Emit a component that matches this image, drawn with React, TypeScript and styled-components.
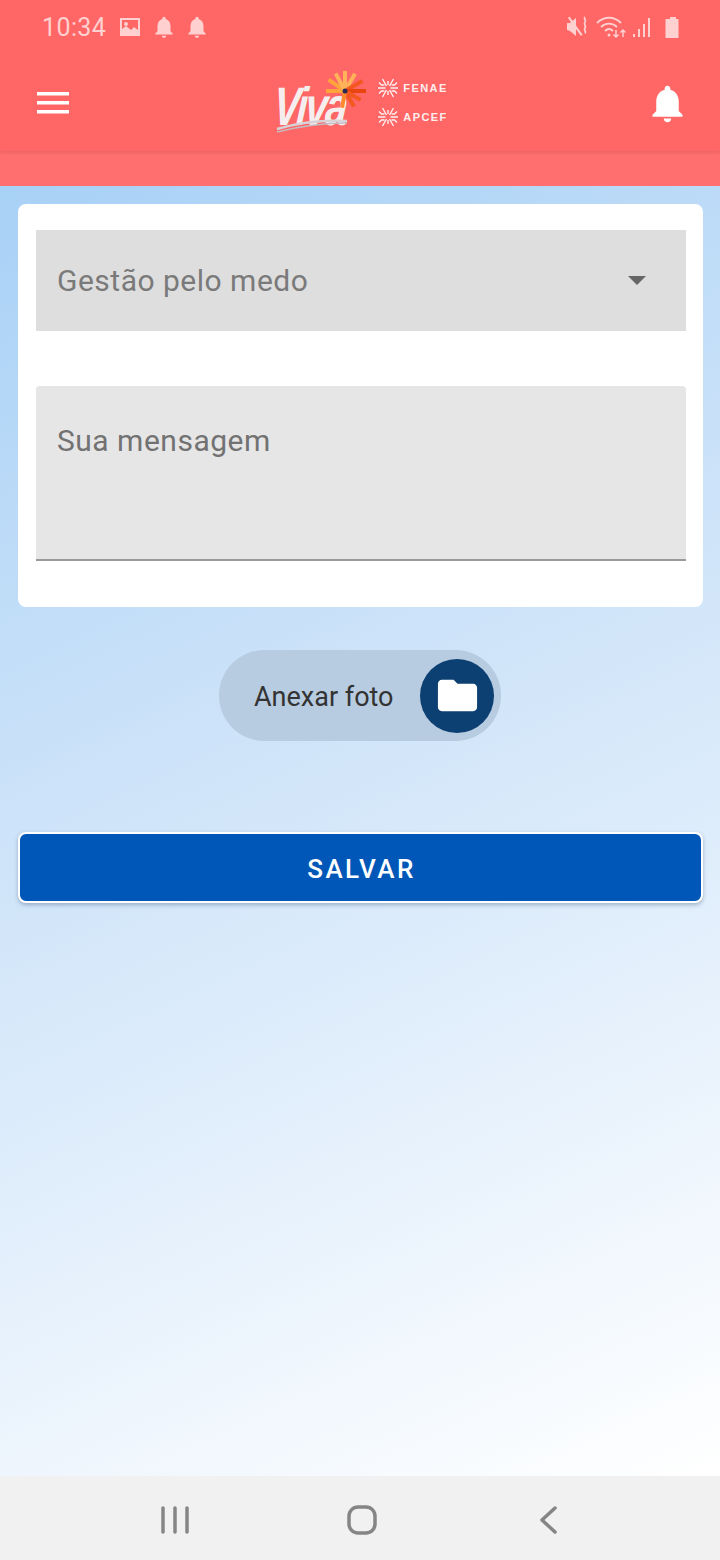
import React from "react";
import styled, { createGlobalStyle } from "styled-components";

const GlobalStyle = createGlobalStyle`
  html, body {
    margin: 0;
    padding: 0;
    background: #fff;
  }
  * {
    box-sizing: border-box;
  }
`;

const Screen = styled.div`
  width: 720px;
  height: 1560px;
  display: flex;
  flex-direction: column;
  overflow: hidden;
  font-family: Roboto, "Liberation Sans", sans-serif;
`;

const Header = styled.header`
  position: relative;
  z-index: 1;
  height: 151px;
  background: #ff6666;
  box-shadow: 0 1px 4px rgba(120, 40, 40, 0.22);
`;

const StatusBar = styled.div`
  height: 54px;
  padding: 0 35px 0 42px;
  display: flex;
  align-items: center;
  justify-content: space-between;
  color: #ffd0d0;
`;

const StatusGroup = styled.div<{ $gap: number }>`
  display: flex;
  align-items: center;
  gap: ${(p) => p.$gap}px;
`;

const Clock = styled.span`
  font-size: 25px;
  letter-spacing: 0.4px;
  margin-right: 5px;
`;

const PictureIcon = styled.svg`
  margin-right: 2px;
`;

const Toolbar = styled.div`
  height: 97px;
  padding: 0 30px 0 37px;
  display: flex;
  align-items: center;
  justify-content: space-between;
  color: #fff;
`;

const Logo = styled.div`
  display: flex;
  align-items: center;
  margin-left: 10px;
`;

const LogoMark = styled.div`
  position: relative;
  width: 102px;
  height: 66px;
`;

const LogoWord = styled.span`
  position: absolute;
  left: -2px;
  top: 8px;
  font-family: "Liberation Sans", sans-serif;
  font-style: italic;
  font-weight: 700;
  font-size: 54px;
  line-height: 56px;
  letter-spacing: -3px;
  color: #f6eeee;
  transform: scaleX(0.74) skewX(-6deg);
  transform-origin: left center;
`;

const LogoArt = styled.svg`
  position: absolute;
  left: 0;
  top: 0;
`;

const Partners = styled.div`
  display: flex;
  flex-direction: column;
  gap: 9px;
`;

const Partner = styled.div`
  display: flex;
  align-items: center;
  gap: 5px;
  font-family: "Liberation Sans", sans-serif;
  font-size: 11px;
  font-weight: 700;
  letter-spacing: 1.4px;
  color: #fdeeee;
`;

const HeaderBell = styled.span`
  display: flex;
  margin-top: 2px;
`;

const Strip = styled.div`
  height: 35px;
  background: #ff6f6f;
`;

const Content = styled.main`
  flex: 1;
  padding: 18px 17px 0 18px;
  display: flex;
  flex-direction: column;
  background: linear-gradient(155deg, #a8d1f6 0%, #cfe4f9 42%, #ffffff 100%);
`;

const Card = styled.section`
  background: #fff;
  border-radius: 8px;
  padding: 26px 17px 46px 18px;
  display: flex;
  flex-direction: column;
  gap: 55px;
`;

const Select = styled.div`
  height: 101px;
  padding: 0 40px 0 21px;
  display: flex;
  align-items: center;
  justify-content: space-between;
  background: #dedede;
  font-size: 30px;
  letter-spacing: 0.5px;
  color: #7a7a7a;
`;

const Caret = styled.span`
  width: 0;
  height: 0;
  border-left: 9px solid transparent;
  border-right: 9px solid transparent;
  border-top: 9px solid #666;
`;

const MessageField = styled.div`
  height: 175px;
  padding: 38px 21px 0;
  background: #e6e6e6;
  border-bottom: 2px solid #9a9a9a;
  border-radius: 4px 4px 0 0;
  font-size: 30px;
  line-height: 34px;
  letter-spacing: 0.5px;
  color: #727272;
`;

const AttachRow = styled.div`
  display: flex;
  justify-content: center;
  margin-top: 43px;
  padding-right: 1px;
`;

const AttachPill = styled.div`
  width: 282px;
  height: 91px;
  padding: 2px 7px 0 35px;
  display: flex;
  align-items: center;
  justify-content: space-between;
  border-radius: 46px;
  background: #b7cce0;
  font-size: 27px;
  color: #333;
`;

const AttachCircle = styled.span`
  width: 74px;
  height: 74px;
  margin-top: -2px;
  border-radius: 50%;
  background: #0c3f72;
  display: flex;
  align-items: center;
  justify-content: center;
  color: #fff;
`;

const SaveButton = styled.button`
  margin-top: 91px;
  height: 71px;
  padding: 3px 0 0 2px;
  border: 2px solid #fff;
  border-radius: 8px;
  background: #0057b8;
  box-shadow: 0 2px 4px rgba(40, 70, 110, 0.35);
  font-family: inherit;
  font-size: 26px;
  font-weight: 500;
  letter-spacing: 2.4px;
  color: #fff;
`;

const NavBar = styled.nav`
  height: 84px;
  padding: 3px 0 0 161px;
  background: #f1f1f1;
  display: grid;
  grid-template-columns: 186px 193px 18px;
  align-items: center;
  color: #858585;
`;

const bellPath =
  "M12 22c1.1 0 2-.9 2-2h-4c0 1.1.89 2 2 2zm6-6v-5c0-3.07-1.64-5.64-4.5-6.32V4c0-.83-.67-1.5-1.5-1.5s-1.5.67-1.5 1.5v.68C7.63 5.36 6 7.92 6 11v5l-2 2v1h16v-1l-2-2z";

const Bell = ({ size }: { size: number }) => (
  <svg width={size} height={size} viewBox="0 0 24 24" fill="currentColor">
    <path d={bellPath} />
  </svg>
);

const Flake = () => (
  <svg width="20" height="20" viewBox="0 0 20 20" stroke="#fdeeee" strokeWidth="1.4" fill="none">
    <path d="M0 10h7.500M12.500 10h7.500M4.500 1l4 7M15.500 1l-4 7M4.500 19l4-7M15.500 19l-4-7M1 4.500l2.500 2.500h3M19 4.500L16.500 7h-3M1 15.500L3.500 13h3M19 15.500L16.500 13h-3M10 3v4M10 13v4" />
  </svg>
);

const rays = [
  { a: -90, c: "#ffb25a", l: 20 },
  { a: -60, c: "#ffb25a", l: 20 },
  { a: -30, c: "#f2581f", l: 20 },
  { a: 0, c: "#e8450f", l: 21 },
  { a: 30, c: "#f2581f", l: 18 },
  { a: 60, c: "#f2581f", l: 18 },
  { a: 100, c: "#ff8a2e", l: 17 },
  { a: 180, c: "#ffa33c", l: 19 },
  { a: -145, c: "#ffa33c", l: 20 },
  { a: -118, c: "#ffb25a", l: 20 },
];

export default function App() {
  return (
    <>
      <GlobalStyle />
      <Screen>
        <Header>
          <StatusBar>
            <StatusGroup $gap={7}>
              <Clock>10:34</Clock>
              <PictureIcon width="24" height="24" viewBox="0 0 24 24" fill="currentColor">
                <path d="M2 3h20v18H2zM4 5v9l4-3 5 4 3-3 4 3V5zM8 7a2 2 0 1 1 0 4 2 2 0 0 1 0-4z" fillRule="evenodd" />
              </PictureIcon>
              <Bell size={26} />
              <Bell size={26} />
            </StatusGroup>
            <StatusGroup $gap={6}>
              <svg width="24" height="24" viewBox="0 0 24 24" fill="currentColor">
                <path d="M1 8l3 0 6-5v18l-6-5-3-1zM2 3l1.500-1.500 13 18-1.500 1.500z" />
                <path d="M19 2c-2 2 2 3.500 0 5.500s2 3.500 0 5.500 2 3.500 0 5.500" fill="none" stroke="currentColor" strokeWidth="1.800" />
              </svg>
              <svg width="30" height="24" viewBox="0 0 30 24" fill="none" stroke="currentColor" strokeWidth="1.800">
                <path d="M1 8c7-7 17-7 24 0M5 12c4.500-4.500 11.500-4.500 16 0M9 16c2.500-2.500 5.500-2.500 8 0" />
                <circle cx="13" cy="20" r="1.500" fill="currentColor" stroke="none" />
                <path d="M20 15v7M27 22v-7M24.500 17.500l2.500-2.500 2.500 2.500M17.500 19.500l2.500 2.500 2.500-2.500" strokeWidth="1.500" />
              </svg>
              <svg width="20" height="24" viewBox="0 0 20 24" fill="currentColor">
                <path d="M1 19h2v3H1zM6 14h2v8H6zM11 9h2v13h-2zM16 3h2v19h-2z" />
              </svg>
              <svg width="27" height="24" viewBox="0 0 27 24" fill="currentColor">
                <path d="M12 2h6v2h2.500v19h-13V4H12z" />
              </svg>
            </StatusGroup>
          </StatusBar>
          <Toolbar>
            <svg width="32" height="24" viewBox="0 0 32 24" fill="currentColor">
              <path d="M0 1h32v3.500H0zM0 10h32v3.500H0zM0 19h32v3.500H0z" />
            </svg>
            <Logo>
              <LogoMark>
                <LogoWord>Viva</LogoWord>
                <LogoArt width="102" height="66" viewBox="0 0 102 66">
                  {rays.map((r) => (
                    <line
                      key={r.a}
                      x1="69"
                      y1="21"
                      x2={69 + r.l * Math.cos((r.a * Math.PI) / 180)}
                      y2={21 + r.l * Math.sin((r.a * Math.PI) / 180)}
                      stroke={r.c}
                      strokeWidth="4"
                    />
                  ))}
                  <circle cx="69" cy="21" r="2.500" fill="#2c2a55" />
                  <path d="M1 59C25 52 50 50 71 51" stroke="#d8d2d6" strokeWidth="2.500" fill="none" />
                  <path d="M1 62C25 56 50 53 71 53" stroke="#c4bcc2" strokeWidth="1.500" fill="none" />
                </LogoArt>
              </LogoMark>
              <Partners>
                <Partner>
                  <Flake />
                  FENAE
                </Partner>
                <Partner>
                  <Flake />
                  APCEF
                </Partner>
              </Partners>
            </Logo>
            <HeaderBell>
              <Bell size={45} />
            </HeaderBell>
          </Toolbar>
        </Header>
        <Strip />
        <Content>
          <Card>
            <Select>
              Gestão pelo medo
              <Caret />
            </Select>
            <MessageField>Sua mensagem</MessageField>
          </Card>
          <AttachRow>
            <AttachPill>
              Anexar foto
              <AttachCircle>
                <svg width="47" height="47" viewBox="0 0 24 24" fill="currentColor">
                  <path d="M10 4H4c-1.100 0-1.990.9-1.990 2L2 18c0 1.100.9 2 2 2h16c1.100 0 2-.9 2-2V8c0-1.100-.9-2-2-2h-8l-2-2z" />
                </svg>
              </AttachCircle>
            </AttachPill>
          </AttachRow>
          <SaveButton>SALVAR</SaveButton>
        </Content>
        <NavBar>
          <svg width="28" height="28" viewBox="0 0 28 28" stroke="currentColor" strokeWidth="3.500" strokeLinecap="round">
            <path d="M2 2v24M14 2v24M26 2v24" />
          </svg>
          <svg width="30" height="30" viewBox="0 0 30 30" fill="none" stroke="currentColor" strokeWidth="3.500">
            <rect x="2" y="2" width="26" height="26" rx="9" />
          </svg>
          <svg width="18" height="28" viewBox="0 0 18 28" fill="none" stroke="currentColor" strokeWidth="3.500" strokeLinecap="round" strokeLinejoin="round">
            <path d="M15 2L2 14l13 12" />
          </svg>
        </NavBar>
      </Screen>
    </>
  );
}
